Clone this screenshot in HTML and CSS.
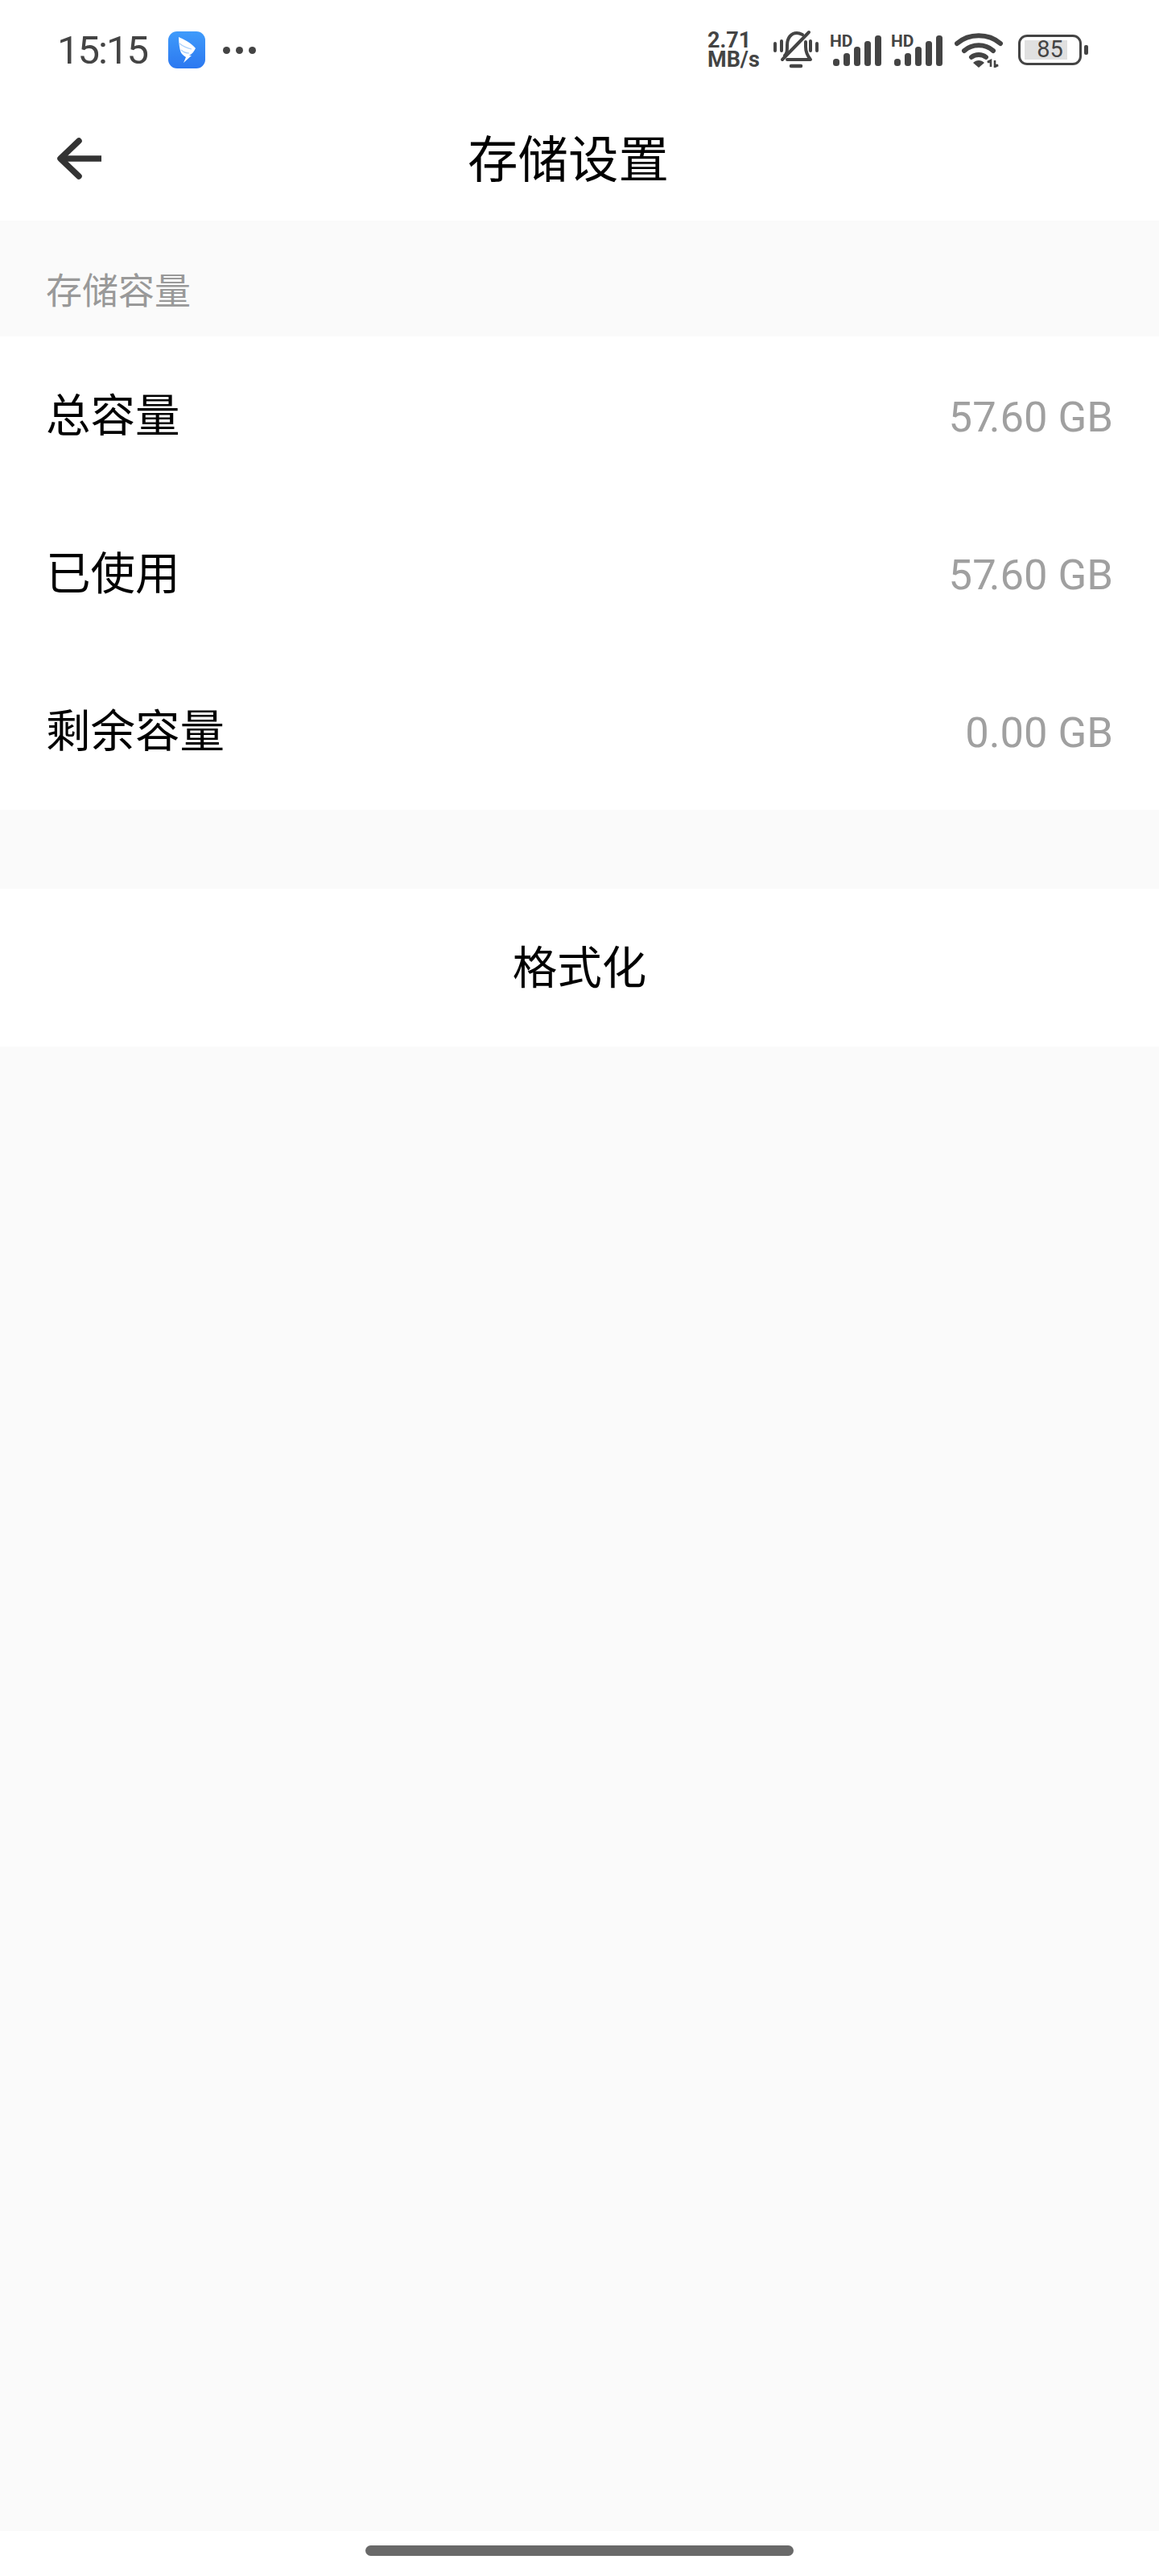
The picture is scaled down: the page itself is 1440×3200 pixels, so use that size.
FILE: index.html
```html
<!DOCTYPE html>
<html lang="zh-CN">
<head>
    <meta charset="UTF-8">
    <meta name="viewport" content="width=device-width, initial-scale=1.0">
    <title>存储设置</title>
    <link rel="stylesheet" href="styles.css">
</head>
<body>
<div class="screen">
    <div class="status-bar">
        <div class="status-left">
            <span class="time">15:15</span>
            <svg class="app-icon" viewBox="0 0 46 46">
                <defs>
                    <linearGradient id="appBlue" x1="0" y1="0" x2="0" y2="1">
                        <stop offset="0" stop-color="#3f9bfb"/>
                        <stop offset="1" stop-color="#2c78f0"/>
                    </linearGradient>
                </defs>
                <rect width="46" height="46" rx="11" fill="url(#appBlue)"/>
                <path d="M13 7 C20 10 28 14 34 21 C32 25 30 28 26 30 L29 30 L19 39 L22 32 C19 30 16 28 15 24 C14 20 13 13 13 7Z" fill="#fff"/>
                <path d="M14 15 C19 19 24 21 29 22 M16 23 C19 26 22 27 26 27" fill="none" stroke="#a8cffb" stroke-width="1.2"/>
            </svg>
            <div class="dots"><i></i><i></i><i></i></div>
        </div>
        <div class="status-right">
            <div class="speed"><span>2.71</span><span>MB/s</span></div>
            <svg class="bell" viewBox="0 0 56 48" fill="none" stroke="#444" stroke-width="4" stroke-linecap="round" stroke-linejoin="round">
                <path d="M2 16v9M54 16v9M10 13v12M46 13v12"/>
                <path d="M14 31C17 28 17 25 17 18C17 9 22 3 29 3C32 3 34 4 36 5"/>
                <path d="M40 14V20C40 27 42 31 46 36H17"/>
                <path d="M44 2L11 36"/>
                <path d="M22 44H34" stroke-width="4.5"/>
            </svg>
            <svg class="signal" viewBox="0 0 64 42">
                <text x="0" y="17" class="hd">HD</text>
                <rect x="4" y="32" width="8" height="9" rx="3.5" fill="#444"/>
                <rect x="17" y="25" width="8" height="16" rx="3.5" fill="#444"/>
                <rect x="30" y="17" width="8" height="24" rx="3.5" fill="#444"/>
                <rect x="43" y="10" width="8" height="31" rx="3.5" fill="#444"/>
                <rect x="56" y="3" width="8" height="38" rx="3.5" fill="#444"/>
            </svg>
            <svg class="signal" viewBox="0 0 64 42">
                <text x="0" y="17" class="hd">HD</text>
                <rect x="4" y="32" width="8" height="9" rx="3.5" fill="#444"/>
                <rect x="17" y="25" width="8" height="16" rx="3.5" fill="#444"/>
                <rect x="30" y="17" width="8" height="24" rx="3.5" fill="#444"/>
                <rect x="43" y="10" width="8" height="31" rx="3.5" fill="#444"/>
                <rect x="56" y="3" width="8" height="38" rx="3.5" fill="#444"/>
            </svg>
            <svg class="wifi" viewBox="0 0 60 44" fill="none" stroke="#444" stroke-width="6" stroke-linecap="round">
                <path d="M3 14C18 1 42 1 57 14"/>
                <path d="M12 23C22 14 38 14 48 23"/>
                <path d="M21 31C26 27 34 27 39 31"/>
                <path d="M23 38L30 44L37 38C33 34 27 34 23 38Z" fill="#444" stroke="none"/>
                <path d="M45 43V35L41 37H45M50 35V43L54 41H50" stroke-width="2.6" stroke-linecap="butt"/>
            </svg>
            <div class="battery">
                <div class="battery-body">
                    <div class="battery-fill"></div>
                    <span class="battery-num">85</span>
                </div>
                <div class="battery-nub"></div>
            </div>
        </div>
    </div>

    <div class="nav-bar">
        <svg class="back" viewBox="0 0 60 60" fill="none" stroke="#333" stroke-width="7.5" stroke-linejoin="round">
            <path d="M58 30H8"/>
            <path d="M30 8L7 30L30 52" stroke-linecap="round"/>
        </svg>
        <h1>存储设置</h1>
    </div>

    <div class="section-title">存储容量</div>
    <div class="group">
        <div class="row"><span class="label">总容量</span><span class="value">5<span class="tight">7</span>.60 GB</span></div>
        <div class="row"><span class="label">已使用</span><span class="value">5<span class="tight">7</span>.60 GB</span></div>
        <div class="row"><span class="label">剩余容量</span><span class="value">0.00 GB</span></div>
    </div>

    <div class="format-btn"><span class="label">格式化</span></div>

    <div class="spacer"></div>

    <div class="home-area"><div class="home-bar"></div></div>
</div>
</body>
</html>
```

FILE: styles.css
```css
body {
    margin: 0;
    background-color: #fff;
    font-family: "Noto Sans CJK SC", Roboto, sans-serif;
}

.screen {
    width: 1440px;
    height: 3200px;
    display: flex;
    flex-direction: column;
    background-color: #fafafa;
}

.status-bar {
    height: 124px;
    padding: 0 88px 0 71px;
    box-sizing: border-box;
    background-color: #fff;
    display: flex;
    justify-content: space-between;
    align-items: center;
}

.status-left,
.status-right {
    display: flex;
    align-items: center;
}

.time {
    font-family: Roboto, sans-serif;
    font-size: 49px;
    letter-spacing: -2px;
    color: #444;
    line-height: 1;
}

.app-icon {
    width: 46px;
    height: 46px;
    margin-left: 26px;
}

.dots {
    display: flex;
    gap: 7px;
    margin-left: 22px;
}

.dots i {
    width: 9px;
    height: 9px;
    border-radius: 50%;
    background-color: #444;
}

.speed {
    display: flex;
    flex-direction: column;
    font-family: Roboto, sans-serif;
    font-size: 27px;
    font-weight: 700;
    line-height: 24px;
    color: #444;
    width: 67px;
}

.bell {
    width: 56px;
    height: 48px;
    margin-left: 15px;
    overflow: visible;
}

.signal {
    width: 64px;
    height: 42px;
    margin-left: 14px;
    overflow: visible;
}

.signal + .signal {
    margin-left: 12px;
}

.hd {
    font-family: Roboto, sans-serif;
    font-size: 21px;
    font-weight: 700;
    fill: #444;
}

.wifi {
    width: 60px;
    height: 44px;
    margin-left: 15px;
}

.battery {
    display: flex;
    align-items: center;
    margin-left: 19px;
}

.battery-body {
    width: 79px;
    height: 38px;
    box-sizing: border-box;
    border: 3.5px solid #444;
    border-radius: 11px;
    padding: 4px 5px;
    position: relative;
}

.battery-fill {
    width: 53px;
    height: 100%;
    background-color: #e0e0e0;
}

.battery-num {
    position: absolute;
    left: 0;
    top: 0;
    width: 100%;
    text-align: center;
    font-family: Roboto, sans-serif;
    font-size: 29px;
    line-height: 31px;
    color: #444;
}

.battery-nub {
    width: 5px;
    height: 12px;
    margin-left: 3px;
    border-radius: 2px;
    background-color: #444;
}

.nav-bar {
    height: 150px;
    background-color: #fff;
    display: flex;
    align-items: center;
    padding-left: 68px;
}

.back {
    width: 60px;
    height: 60px;
    margin-bottom: 4px;
}

.nav-bar h1 {
    margin: 0 0 10px 453px;
    font-size: 62.5px;
    font-weight: 400;
    color: #000;
    line-height: 1;
}

.section-title {
    height: 144px;
    box-sizing: border-box;
    padding: 24px 0 0 57px;
    display: flex;
    align-items: center;
    font-size: 45px;
    color: #999;
}

.group {
    background-color: #fff;
}

.row {
    height: 196px;
    padding: 0 57px;
    display: flex;
    justify-content: space-between;
    align-items: center;
    font-size: 55.5px;
    color: #000;
}

.label {
    margin-bottom: 8px;
}

.value {
    font-family: Roboto, sans-serif;
    font-size: 52.5px;
    font-weight: 400;
    margin-top: 4px;
    color: #a0a0a0;
}

/* the 7 sits tight against the dot in the reference */
.tight {
    letter-spacing: -9px;
}

.format-btn {
    margin-top: 98px;
    height: 196px;
    background-color: #fff;
    display: flex;
    justify-content: center;
    align-items: center;
    font-size: 55.5px;
    color: #000;
}

.spacer {
    flex: 1;
}

.home-area {
    height: 56px;
    box-sizing: border-box;
    padding-top: 18px;
    background-color: #fff;
    display: flex;
    justify-content: center;
}

.home-bar {
    width: 532px;
    height: 13px;
    border-radius: 7px;
    background-color: #696969;
}
```
